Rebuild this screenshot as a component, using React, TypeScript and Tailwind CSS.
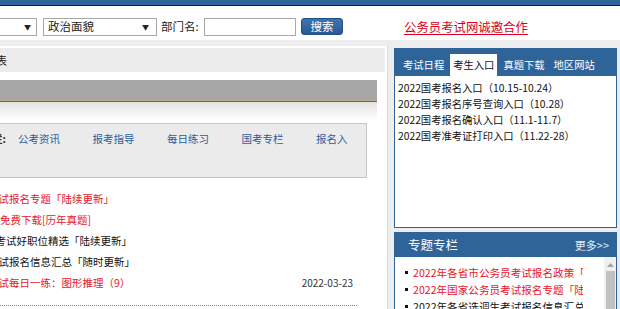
import React from 'react';

const tabs = ['考试日程', '考生入口', '真题下载', '地区网站'];

const entries = [
  '2022国考报名入口（10.15-10.24）',
  '2022国考报名序号查询入口（10.28）',
  '2022国考报名确认入口（11.1-11.7）',
  '2022国考准考证打印入口（11.22-28）',
];

const navLinks = ['公考资讯', '报考指导', '每日练习', '国考专栏', '报名入'];

const specials = [
  { text: '2022年各省市公务员考试报名政策「汇总」', red: true },
  { text: '2022年国家公务员考试报名专题「陆续更新」', red: true },
  { text: '2022年各省选调生考试报名信息汇总', red: false },
];

export default function App() {
  return (
    <div className="w-[620px] h-[309px] overflow-hidden bg-[#ededed] font-['Noto_Sans_CJK_SC',sans-serif] text-[#222]">
      <div className="h-[5px] bg-[#2e6499]" />
      <div className="h-px bg-[#17212c]" />

      {/* search bar */}
      <div className="h-[34px] bg-white flex items-start pt-[12px] text-[11.5px] leading-none whitespace-nowrap">
        <div className="-ml-[60px] w-[97px] h-[18px] shrink-0 border border-[#a8a8a8] flex items-center justify-end pr-[5px] text-[7px]">▼</div>
        <div className="ml-[6px] w-[114px] h-[18px] shrink-0 border border-[#a8a8a8] flex items-center justify-between pl-[4px] pr-[7px]">
          <span>政治面貌</span>
          <span className="text-[7px]">▼</span>
        </div>
        <span className="w-[47px] h-[18px] shrink-0 flex items-center pl-[4px]">部门名:</span>
        <div className="w-[92px] h-[18px] shrink-0 border border-[#a8a8a8]" />
        <button className="ml-[5px] w-[42px] h-[17px] shrink-0 rounded-[3px] bg-linear-to-b from-[#3d74b0] to-[#285a92] border border-[#1f4f85] text-white text-[11.5px] leading-none">搜索</button>
        <a className="ml-[61px] h-[18px] flex items-center text-[12.4px] text-[#d9001b] underline underline-offset-2">公务员考试网诚邀合作</a>
      </div>

      <div className="h-[6px]" />

      <div className="flex gap-[6px] items-start">
        {/* left panel */}
        <div className="w-[388px] h-[263px] shrink-0 bg-white border-r border-[#dcdcdc] overflow-hidden pt-[2px]">
          <div className="h-[24px] bg-[#ececec] mr-[2px] flex items-center text-[11px] whitespace-nowrap">
            <span className="-ml-[26px]">时间表</span>
          </div>
          <div className="mt-[8px] w-[377px] h-[20px] bg-[#a7a7a7]" />
          <div className="w-[377px] h-px bg-[#bba98a]" />
          <div className="w-[377px] h-px bg-[#3f6ca3]" />
          <div className="w-[377px] h-[18px] bg-linear-to-b from-[#e2e2e2] to-white" />

          <div className="mt-[3px] w-[367px] h-[55px] bg-[#ebebeb] border border-l-0 border-[#c6c6c6] flex items-start pt-[9px] text-[10.5px] leading-[12px] whitespace-nowrap">
            <span className="-ml-[8px] w-[26px] shrink-0 font-bold text-[#333]">栏:</span>
            <div className="flex gap-[32.5px]">
              {navLinks.map((l) => (
                <a key={l} className="text-[#2a5d9f]">{l}</a>
              ))}
            </div>
          </div>

          <div className="mt-[10px] text-[10.5px] leading-[21px] whitespace-nowrap">
            <div className="h-[21px] text-[#e5162b]"><span className="-ml-[12px] inline-block">考试报名专题「陆续更新」</span></div>
            <div className="h-[21px] text-[#e5162b]"><span className="-ml-[10.5px] inline-block">题免费下载[历年真题]</span></div>
            <div className="h-[21px] text-[#111]"><span className="-ml-[15px] inline-block">国考试好职位精选「陆续更新」</span></div>
            <div className="h-[21px] text-[#111]"><span className="-ml-[12px] inline-block">考试报名信息汇总「随时更新」</span></div>
            <div className="h-[21px] w-[353px] flex justify-between">
              <span className="-ml-[12px] text-[#e5162b]">考试每日一练：图形推理（9）</span>
              <span className="text-[10px] text-[#333]">2022-03-23</span>
            </div>
          </div>
          <div className="mt-[12px] w-[357px] border-t border-dotted border-[#8a8a8a]" />
        </div>

        {/* right column */}
        <div className="w-[223px] shrink-0 mt-[2px]">
          <div className="h-[180px] border border-[#2f6499] bg-white">
            <div className="h-[27px] bg-[#2f6499] flex items-end pl-[5px] gap-[3px]">
              {tabs.map((t) => (
                <div
                  key={t}
                  className={`h-[22px] px-[3px] flex items-center text-[10.3px] leading-none ${t === '考生入口' ? 'bg-white text-[#111]' : 'text-white'}`}
                >
                  {t}
                </div>
              ))}
            </div>
            <div className="pt-[4px] pl-[3px] text-[10.3px] leading-[16px] text-[#111] whitespace-nowrap">
              {entries.map((e) => (
                <div key={e}>{e}</div>
              ))}
            </div>
          </div>

          <div className="mt-[4px] h-[90px] border border-[#2f6499] bg-white flex flex-col">
            <div className="h-[24px] shrink-0 bg-[#2f6499] flex items-center justify-between pl-[13px] pr-[7px]">
              <span className="text-[12.5px] text-white leading-none">专题专栏</span>
              <span className="text-[11px] text-[#e6edf5] leading-none">更多&gt;&gt;</span>
            </div>
            <div className="flex flex-1">
              <div className="flex-1 pt-[7px] pl-[10px] text-[10.6px] leading-[17px]">
                {specials.map((s) => (
                  <div key={s.text} className="flex items-center h-[17px]">
                    <span className="w-[3px] h-[3px] bg-[#111] mr-[5px] shrink-0" />
                    <span className={`w-[170px] overflow-hidden whitespace-nowrap ${s.red ? 'text-[#e5162b]' : 'text-[#111]'}`}>{s.text}</span>
                  </div>
                ))}
              </div>
              <div className="w-[12px] bg-[#f0f0f0] flex flex-col items-center">
                <svg width="7" height="4" viewBox="0 0 7 4" className="mt-[6px]">
                  <polygon points="3.5,0 7,4 0,4" fill="#a3a3a3" />
                </svg>
                <div className="mt-[4px] w-[9px] flex-1 bg-[#c1c1c1]" />
              </div>
            </div>
          </div>
        </div>
      </div>
    </div>
  );
}
